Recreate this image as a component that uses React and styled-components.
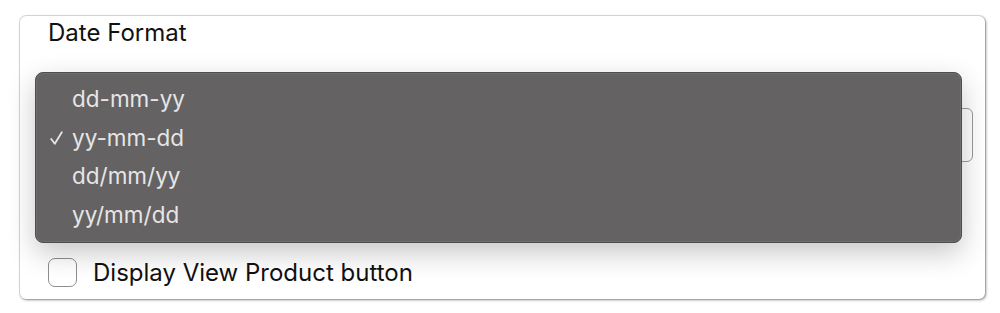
import React from "react";
import styled, { createGlobalStyle } from "styled-components";

const GlobalStyle = createGlobalStyle`
  html, body {
    margin: 0;
    padding: 0;
    background: #ffffff;
  }
  body {
    font-family: Inter, "Liberation Sans", Arial, sans-serif;
    -webkit-font-smoothing: antialiased;
  }
`;

const formats = ["dd-mm-yy", "yy-mm-dd", "dd/mm/yy", "yy/mm/dd"];

const App = () => {
  const selected = "yy-mm-dd";
  return (
    <Page>
      <GlobalStyle />
      <Card>
        <FieldLabel>Date Format</FieldLabel>
        <SelectWrap>
          <SelectBox />
          <Menu>
            {formats.map((f) => (
              <MenuItem key={f}>
                {f === selected && (
                  <Check viewBox="0 0 13 14">
                    <path d="M1.2 8 L4.8 12.8 L11.8 1.2" />
                  </Check>
                )}
                {f}
              </MenuItem>
            ))}
          </Menu>
        </SelectWrap>
        <CheckRow>
          <CheckBox type="checkbox" />
          <CheckLabel>Display View Product button</CheckLabel>
        </CheckRow>
      </Card>
    </Page>
  );
};

const Page = styled.div`
  padding: 16px 15px 13px 20px;
`;

const Card = styled.div`
  background: #fff;
  border-radius: 6px;
  box-shadow: 0 0 0 1px rgba(0, 0, 0, 0.12), 1px 1px 3px rgba(0, 0, 0, 0.4);
  padding: 0 12px 12px 28px;
  display: flex;
  flex-direction: column;
`;

const FieldLabel = styled.div`
  font-size: 24px;
  line-height: 34px;
  color: #111;
`;

const SelectWrap = styled.div`
  position: relative;
  margin-top: 58px;
`;

const SelectBox = styled.div`
  height: 52px;
  border: 1px solid #9a9a9a;
  border-radius: 6px;
  background: #fff;
`;

const Menu = styled.div`
  position: absolute;
  left: -13px;
  right: 11px;
  top: -36px;
  padding: 7px 0 8px;
  background: #646263;
  border: 1px solid #4e4d4d;
  border-radius: 8px;
  box-shadow: inset 0 0 0 1px rgba(255, 255, 255, 0.08),
    0 10px 28px rgba(0, 0, 0, 0.22);
  display: flex;
  flex-direction: column;
`;

const MenuItem = styled.div`
  position: relative;
  height: 38.5px;
  line-height: 38.5px;
  padding-left: 36px;
  font-size: 22.5px;
  color: #e6e6e6;
`;

const Check = styled.svg`
  position: absolute;
  left: 14px;
  top: 12px;
  width: 13px;
  height: 14px;
  fill: none;
  stroke: #e6e6e6;
  stroke-width: 1.8;
  stroke-linecap: round;
  stroke-linejoin: round;
`;

const CheckRow = styled.label`
  display: flex;
  align-items: center;
  gap: 16px;
  margin-top: 96px;
`;

const CheckBox = styled.input`
  appearance: none;
  margin: 0;
  width: 29px;
  height: 29px;
  border: 1.5px solid #8e8e8e;
  border-radius: 7px;
  background: #fff;
  box-sizing: border-box;
`;

const CheckLabel = styled.span`
  font-size: 24px;
  line-height: 29px;
  color: #111;
`;

export default App;
